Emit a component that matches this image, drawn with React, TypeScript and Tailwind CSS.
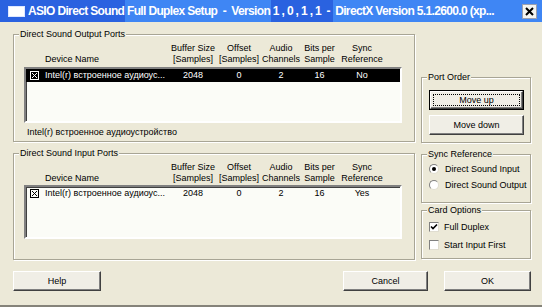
import React from "react";

function ListIcon({ color }: { color: string }) {
  return (
    <svg width="9" height="9" viewBox="0 0 9 9" className="block">
      <rect x="0.5" y="0.5" width="8" height="8" fill="none" stroke={color} strokeWidth="1" />
      <path d="M2 2L7 7M7 2L2 7" stroke={color} strokeWidth="1" />
    </svg>
  );
}

function Btn({ label, cls, def }: { label: string; cls: string; def?: boolean }) {
  if (def) {
    return (
      <div className={`${cls} h-[20px] border border-black`}>
        <div className="h-full border-t border-l border-t-white border-l-white border-b border-r border-b-[#404040] border-r-[#404040] bg-[#F0EEE6] shadow-[inset_-1px_-1px_0_#808080] p-[2px]">
          <div className="h-full border border-dotted border-black flex items-center justify-center leading-[11px]">
            {label}
          </div>
        </div>
      </div>
    );
  }
  return (
    <div
      className={`${cls} h-[20px] flex items-center justify-center border-t border-l border-t-white border-l-white border-b border-r border-b-[#404040] border-r-[#404040] bg-[#F0EEE6] shadow-[inset_-1px_-1px_0_#808080]`}
    >
      {label}
    </div>
  );
}

function Group({ title, cls, children }: { title: string; cls: string; children: React.ReactNode }) {
  return (
    <fieldset
      className={`${cls} border border-[#A8A595] shadow-[inset_1px_1px_0_#ffffff,1px_1px_0_#ffffff] min-w-0`}
    >
      <legend className="ml-[5px] px-[1px] bg-[#ECE9D8] leading-[11px]">{title}</legend>
      {children}
    </fieldset>
  );
}

const COLS = "grid grid-cols-[18px_126px_46px_46px_38px_39px_46px]";

function Headers() {
  return (
    <div className={`${COLS} ml-[12px] mt-[3px] items-end leading-[11px]`}>
      <div />
      <div className="pl-[1px]">Device Name</div>
      <div className="text-center">
        Buffer Size
        <br />
        [Samples]
      </div>
      <div className="text-center">
        Offset
        <br />
        [Samples]
      </div>
      <div className="text-center">
        Audio
        <br />
        Channels
      </div>
      <div className="text-center">
        Bits per
        <br />
        Sample
      </div>
      <div className="text-center">
        Sync
        <br />
        Reference
      </div>
    </div>
  );
}

function Row({ selected, sync }: { selected?: boolean; sync: string }) {
  return (
    <div
      className={`${COLS} h-[13px] leading-[13px] items-center ${selected ? "bg-black text-white" : "text-black"}`}
    >
      <div className="pl-[4px]">
        <ListIcon color={selected ? "#ffffff" : "#000000"} />
      </div>
      <div className="pl-[1px] whitespace-nowrap">Intel(r) встроенное аудиоус...</div>
      <div className="text-center">2048</div>
      <div className="text-center">0</div>
      <div className="text-center">2</div>
      <div className="text-center">16</div>
      <div className="text-center">{sync}</div>
    </div>
  );
}

function ListBox({ cls, children }: { cls: string; children: React.ReactNode }) {
  return (
    <div
      className={`${cls} ml-[10px] w-[378px] bg-[#FBFCF7] border-2 border-t-[#808080] border-l-[#808080] border-b-white border-r-white shadow-[inset_1px_1px_0_#404040] overflow-hidden`}
    >
      {children}
    </div>
  );
}

function Radio({ checked, label }: { checked?: boolean; label: string }) {
  return (
    <div className="flex items-center h-[14px] ml-[7px] gap-[6px]">
      <span className="w-[10px] h-[10px] rounded-full bg-white border border-t-[#808080] border-l-[#808080] border-b-[#e0ddd0] border-r-[#e0ddd0] flex items-center justify-center">
        {checked ? <span className="w-[4px] h-[4px] rounded-full bg-black" /> : null}
      </span>
      <span className="whitespace-nowrap">{label}</span>
    </div>
  );
}

function Check({ checked, label }: { checked?: boolean; label: string }) {
  return (
    <div className="flex items-center h-[14px] ml-[7px] gap-[5px]">
      <span className="w-[10px] h-[10px] bg-white border border-t-[#808080] border-l-[#808080] border-b-[#e0ddd0] border-r-[#e0ddd0] flex items-center justify-center">
        {checked ? (
          <svg width="8" height="8" viewBox="0 0 8 8" className="block">
            <path d="M1 3.5L3 5.5L7 1.5" fill="none" stroke="#000" strokeWidth="1.6" />
          </svg>
        ) : null}
      </span>
      <span className="whitespace-nowrap">{label}</span>
    </div>
  );
}

export default function App() {
  return (
    <div className="w-[542px] h-[307px] bg-[#ECE9D8] flex flex-col font-['Liberation_Sans',Arial,sans-serif] text-[9px] leading-[11px] text-black overflow-hidden border-b-2 border-b-[#85837A]">
      <div className="h-[22px] shrink-0 flex items-center bg-[linear-gradient(to_right,#2a62e0_125px,#3f86f4_125px,#3f86f4_271px,#2a62e0_271px,#2a62e0_333px,#3f86f4_333px)]">
        <div className="ml-[8px] w-[17px] h-[11px] bg-white border border-[#dfe8ff]" />
        <div className="ml-[3px] flex-1 text-white font-bold text-[12px] leading-[14px] tracking-[-0.65px] whitespace-pre overflow-hidden">
          ASIO Direct Sound Full Duplex Setup  -  Version 1 , 0 , 1 , 1  -  DirectX Version 5.1.2600.0 (xp...
        </div>
        <div className="mr-[5px] w-[15px] h-[15px] bg-[#f4f4f0] border border-[#9aa0b0] flex items-center justify-center">
          <svg width="9" height="9" viewBox="0 0 9 9" className="block">
            <path d="M1 1L8 8M8 1L1 8" stroke="#000" strokeWidth="2" />
          </svg>
        </div>
      </div>

      <div className="flex-1 flex flex-col pl-[13px] pr-[11px] pt-[7px]">
        <div className="flex gap-[6px]">
          <div className="w-[402px] flex flex-col">
            <Group title="Direct Sound Output Ports" cls="pb-[3px]">
              <Headers />
              <ListBox cls="mt-[2px] h-[56px]">
                <Row selected sync="No" />
              </ListBox>
              <div className="ml-[13px] mt-[4px] leading-[11px]">Intel(r) встроенное аудиоустройство</div>
            </Group>
            <Group title="Direct Sound Input Ports" cls="mt-[6px] pb-[20px]">
              <Headers />
              <ListBox cls="mt-[1px] h-[54px]">
                <Row sync="Yes" />
              </ListBox>
            </Group>
          </div>

          <div className="w-[110px] flex flex-col pt-[43px]">
            <Group title="Port Order" cls="pb-[7px]">
              <div className="ml-[7px] mt-[7px]">
                <Btn label="Move up" cls="w-[95px]" def />
              </div>
              <div className="ml-[7px] mt-[5px]">
                <Btn label="Move down" cls="w-[95px]" />
              </div>
            </Group>
            <Group title="Sync Reference" cls="mt-[6px] pb-[10px]">
              <div className="mt-[2px]">
                <Radio checked label="Direct Sound Input" />
              </div>
              <div className="mt-[2px]">
                <Radio label="Direct Sound Output" />
              </div>
            </Group>
            <Group title="Card Options" cls="mt-[2px] pb-[6px]">
              <div className="mt-[4px]">
                <Check checked label="Full Duplex" />
              </div>
              <div className="mt-[4px]">
                <Check label="Start Input First" />
              </div>
            </Group>
          </div>
        </div>

        <div className="mt-[11px] flex justify-between">
          <Btn label="Help" cls="w-[88px]" />
          <div className="flex gap-[16px]">
            <Btn label="Cancel" cls="w-[85px]" />
            <Btn label="OK" cls="w-[87px]" />
          </div>
        </div>
      </div>
    </div>
  );
}
